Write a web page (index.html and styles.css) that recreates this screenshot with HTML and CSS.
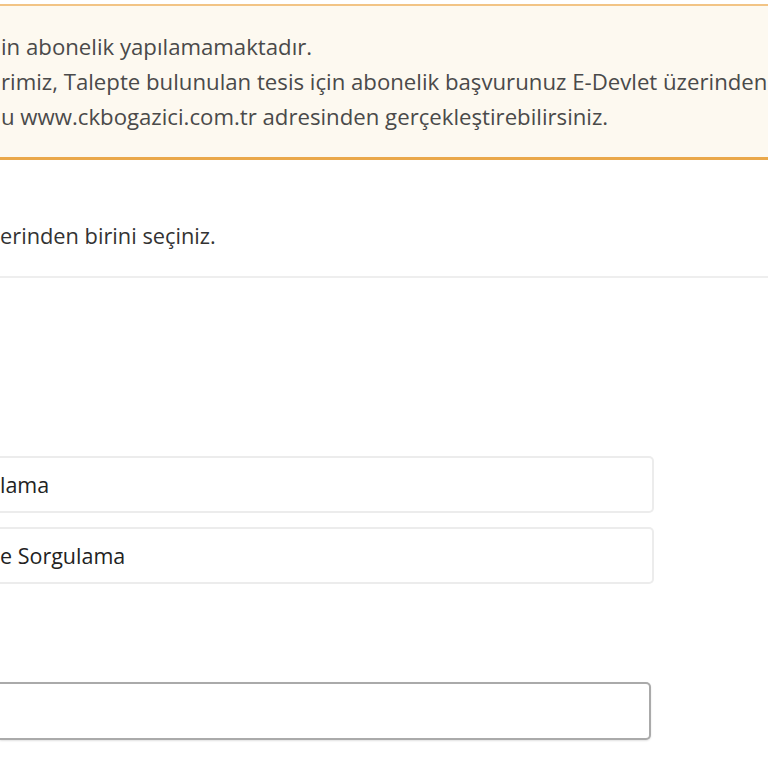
FILE: index.html
```html
<!DOCTYPE html>
<html lang="tr">
<head>
  <meta charset="UTF-8" />
  <meta name="viewport" content="width=device-width, initial-scale=1.0"/>
  <title>Abonelik Başvurusu</title>
  <link rel="stylesheet" href="styles.css">
</head>
<body>
  <div class="page">
    <div class="alert">
      <p>in abonelik yapılamamaktadır.</p>
      <p>rimiz, Talepte bulunulan tesis için abonelik başvurunuz E-Devlet üzerinden</p>
      <p>u www.ckbogazici.com.tr adresinden gerçekleştirebilirsiniz.</p>
    </div>
    <div class="panel">
      <div class="panel-heading">erinden birini seçiniz.</div>
      <div class="panel-body">
        <div class="list-group">
          <a class="list-item">lama</a>
          <a class="list-item">e Sorgulama</a>
        </div>
        <div class="form-group">
          <input type="text" class="form-control" />
        </div>
      </div>
    </div>
  </div>
</body>
</html>
```

FILE: styles.css
```css
html, body {
  margin: 0;
  padding: 0;
  background: #fff;
}
body {
  font-family: "Open Sans", "Noto Sans", sans-serif;
  font-size: 21.5px;
  line-height: 35px;
  color: #333;
  overflow: hidden;
}
.page {
  width: 768px;
  height: 768px;
  overflow: hidden;
}
.alert {
  margin-top: 4px;
  padding: 23px 0 23px 1px;
  background-color: #fdf9f0;
  border-top: 2px solid #f2c485;
  border-bottom: 3px solid #eaa84a;
  color: #4a4a4a;
  font-size: 22.2px;
  white-space: nowrap;
}
.alert p {
  margin: 0;
}
.panel-heading {
  margin-top: 58px;
  padding-bottom: 23px;
  border-bottom: 2px solid #eeeeee;
  color: #333;
  font-size: 21.8px;
  white-space: nowrap;
}
.panel-body {
  padding-top: 178px;
}
.list-group {
  width: 654px;
  display: flex;
  flex-direction: column;
  gap: 14px;
}
.list-item {
  display: block;
  padding: 9px 0;
  border: 2px solid #ececec;
  border-left: none;
  border-radius: 0 5px 5px 0;
  color: #222;
  text-decoration: none;
  white-space: nowrap;
}
.form-group {
  margin-top: 98px;
  width: 651px;
}
.form-control {
  display: block;
  box-sizing: border-box;
  width: 100%;
  height: 58px;
  margin: 0;
  border: 2px solid #aaaaaa;
  border-left: none;
  border-radius: 0 5px 5px 0;
  background: #fff;
  box-shadow: 0 1px 2px rgba(0, 0, 0, 0.12);
  font: inherit;
}
```
